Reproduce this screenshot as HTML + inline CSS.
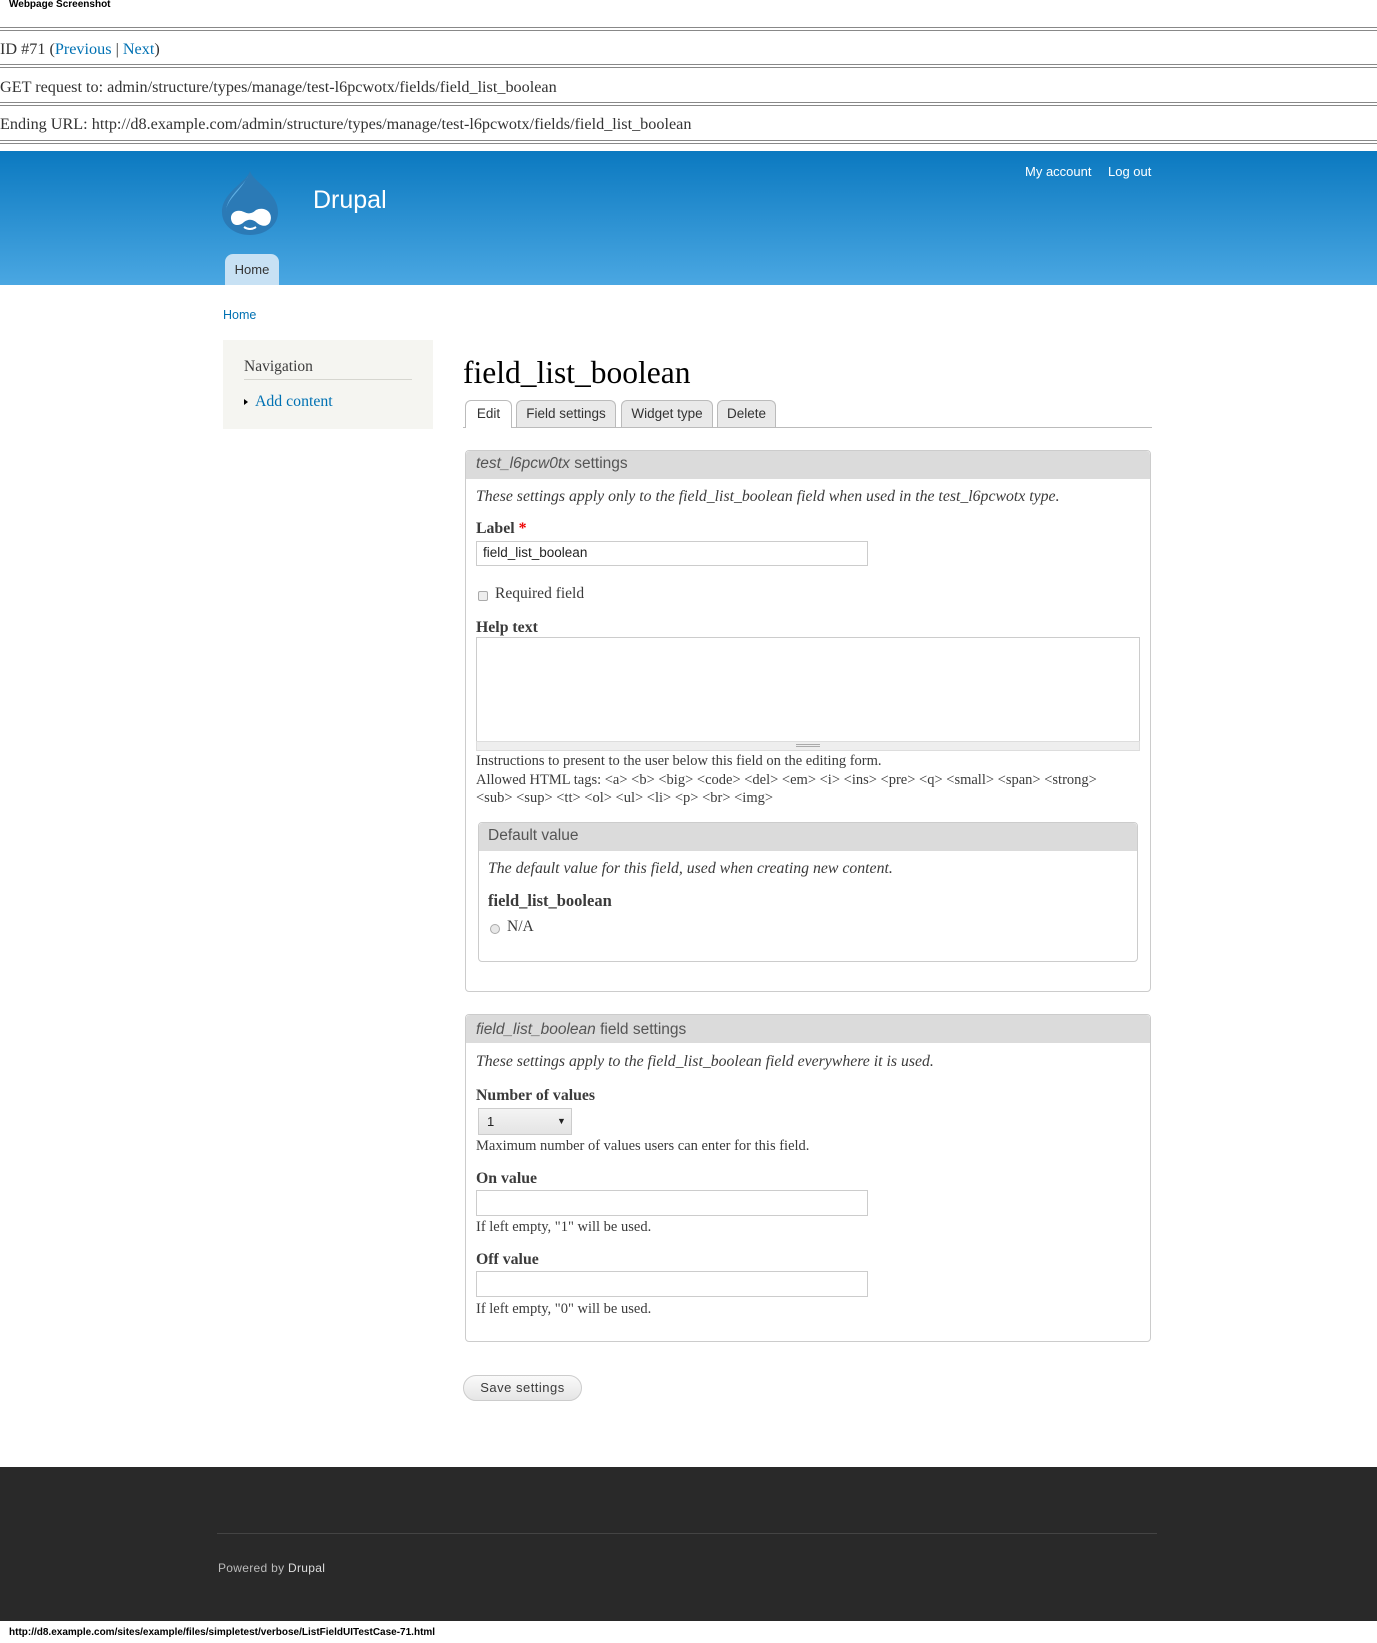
<!DOCTYPE html>
<html><head><meta charset="utf-8"><style>
*{margin:0;padding:0;box-sizing:border-box}
body{width:1377px;height:1639px;position:relative;background:#fff;overflow:hidden;font-family:"Liberation Serif",serif;color:#3b3b3b}
.t{position:absolute;white-space:nowrap;line-height:20px}
.s{font-family:"Liberation Sans",sans-serif}
.hr{position:absolute;left:0;width:1377px;height:4px;border-top:1px solid #888;border-bottom:1px solid #888}
.box{position:absolute;border:1px solid #ccc;border-radius:4px;background:#fff}
.lg{position:absolute;left:0;right:0;top:0;height:28px;background:#dbdbdb;border-radius:4px 4px 0 0}
.in{position:absolute;border:1px solid #ccc;background:#fff}
a{color:#0071b3;text-decoration:none}
.tab{position:absolute;top:400px;height:27px;border:1px solid #bbb;border-bottom:none;border-radius:6px 6px 0 0;background:#e9e9e9;font-family:"Liberation Sans",sans-serif;font-size:13.5px;color:#333;line-height:26px;text-align:center}
.b{font-size:15.8px;font-weight:bold}
</style></head><body>
<div class="t s" style="left:9px;top:-5px;font-size:10px;font-weight:bold;color:#000">Webpage Screenshot</div>
<div class="hr" style="top:27px"></div>
<div class="t" style="left:0;top:39px;font-size:16.2px;color:#333">ID #71 (<a>Previous</a> | <a>Next</a>)</div>
<div class="hr" style="top:64px"></div>
<div class="t" style="left:0;top:77px;font-size:16.2px;color:#333">GET request to: admin/structure/types/manage/test-l6pcwotx/fields/field_list_boolean</div>
<div class="hr" style="top:102px"></div>
<div class="t" style="left:0;top:114px;font-size:16.2px;color:#333">Ending URL: http://d8.example.com/admin/structure/types/manage/test-l6pcwotx/fields/field_list_boolean</div>
<div class="hr" style="top:140px"></div>

<div style="position:absolute;left:0;top:151px;width:1377px;height:134px;background:linear-gradient(#0b79c0,#4aa7e2)"></div>
<svg style="position:absolute;left:220px;top:170px" width="60" height="66" viewBox="0 0 60 66">
<path d="M30 1 C33 12 58 22 58 42 C58 56 45 65 30 65 C15 65 2 56 2 42 C2 22 27 12 30 1Z" fill="#2b7ab6"/>
<path d="M28 6 C24 16 6 26 6 42 C6 30 20 22 28 6Z" fill="#5fb0e4"/>
<path d="M12 52 C8 44 16 38 24 42 C28 44 32 44 36 40 C44 36 54 42 50 52 C47 58 40 56 36 52 C32 49 28 49 24 52 C20 56 14 56 12 52Z" fill="#fff"/>
<path d="M24 57 Q30 61 36 57" stroke="#fff" stroke-width="2" fill="none"/>
</svg>
<div class="t s" style="left:313px;top:184px;font-size:25px;line-height:32px;color:#fff">Drupal</div>
<div class="t s" style="left:1025px;top:162px;font-size:13px;color:#fff">My account</div>
<div class="t s" style="left:1108px;top:162px;font-size:13px;color:#fff">Log out</div>
<div style="position:absolute;left:225px;top:254px;width:54px;height:31px;background:#c7e1f4;border-radius:8px 8px 0 0;font-family:'Liberation Sans',sans-serif;font-size:13px;color:#333;text-align:center;line-height:31px">Home</div>

<div class="t s" style="left:223px;top:305px;font-size:12.5px;color:#0071b3">Home</div>
<div style="position:absolute;left:223px;top:340px;width:210px;height:89px;background:#f5f5f1"></div>
<div class="t" style="left:244px;top:357px;font-size:15.5px;color:#3b3b3b">Navigation</div>
<div style="position:absolute;left:244px;top:379px;width:168px;height:1px;background:#d6d6d0"></div>
<div style="position:absolute;left:244px;top:399px;border-left:4px solid #000;border-top:3px solid transparent;border-bottom:3px solid transparent"></div>
<div class="t" style="left:255px;top:392px;font-size:15.8px;color:#0071b3">Add content</div>

<div class="t" style="left:463px;top:355px;font-size:31.5px;line-height:36px;color:#000">field_list_boolean</div>
<div style="position:absolute;left:463px;top:427px;width:689px;height:1px;background:#bbb"></div>
<div class="tab" style="left:465px;width:47px;background:#fff;height:28px">Edit</div>
<div class="tab" style="left:516px;width:100px">Field settings</div>
<div class="tab" style="left:621px;width:92px">Widget type</div>
<div class="tab" style="left:717px;width:59px">Delete</div>

<div class="box" style="left:465px;top:450px;width:686px;height:542px"><div class="lg"></div></div>
<div class="t s" style="left:476px;top:454px;font-size:15.5px;color:#555"><i>test_l6pcw0tx</i> settings</div>
<div class="t" style="left:476px;top:487px;font-size:15.8px;font-style:italic">These settings apply only to the field_list_boolean field when used in the test_l6pcwotx type.</div>
<div class="t b" style="left:476px;top:519px">Label <span style="color:#e00">*</span></div>
<div class="in" style="left:476px;top:541px;width:392px;height:25px"></div>
<div class="t s" style="left:483px;top:543px;font-size:13.5px;color:#222">field_list_boolean</div>
<div style="position:absolute;left:478px;top:591px;width:10px;height:10px;border:1px solid #aaa;border-radius:2px;background:#eee"></div>
<div class="t" style="left:495px;top:584px;font-size:15.5px">Required field</div>
<div class="t b" style="left:476px;top:618px">Help text</div>
<div class="in" style="left:476px;top:637px;width:664px;height:105px"></div>
<div style="position:absolute;left:476px;top:741px;width:664px;height:10px;background:#eee;border:1px solid #ddd"></div>
<div style="position:absolute;left:796px;top:744px;width:24px;height:3px;border-top:1px solid #aaa;border-bottom:1px solid #aaa"></div>
<div class="t" style="left:476px;top:751px;font-size:14.5px">Instructions to present to the user below this field on the editing form.</div>
<div class="t" style="left:476px;top:770px;font-size:14.5px">Allowed HTML tags: &lt;a&gt; &lt;b&gt; &lt;big&gt; &lt;code&gt; &lt;del&gt; &lt;em&gt; &lt;i&gt; &lt;ins&gt; &lt;pre&gt; &lt;q&gt; &lt;small&gt; &lt;span&gt; &lt;strong&gt;</div>
<div class="t" style="left:476px;top:788px;font-size:14.5px">&lt;sub&gt; &lt;sup&gt; &lt;tt&gt; &lt;ol&gt; &lt;ul&gt; &lt;li&gt; &lt;p&gt; &lt;br&gt; &lt;img&gt;</div>

<div class="box" style="left:478px;top:822px;width:660px;height:140px"><div class="lg"></div></div>
<div class="t s" style="left:488px;top:826px;font-size:15.5px;color:#555">Default value</div>
<div class="t" style="left:488px;top:859px;font-size:15.8px;font-style:italic">The default value for this field, used when creating new content.</div>
<div class="t b" style="left:488px;top:891px;font-size:16.5px">field_list_boolean</div>
<div style="position:absolute;left:490px;top:924px;width:10px;height:10px;border:1px solid #aaa;border-radius:50%;background:#e8e8e8"></div>
<div class="t" style="left:507px;top:917px;font-size:15.5px">N/A</div>

<div class="box" style="left:465px;top:1014px;width:686px;height:328px"><div class="lg"></div></div>
<div class="t s" style="left:476px;top:1020px;font-size:15.5px;color:#555"><i>field_list_boolean</i> field settings</div>
<div class="t" style="left:476px;top:1052px;font-size:15.8px;font-style:italic">These settings apply to the field_list_boolean field everywhere it is used.</div>
<div class="t b" style="left:476px;top:1086px">Number of values</div>
<div style="position:absolute;left:478px;top:1108px;width:94px;height:27px;border:1px solid #ccc;background:linear-gradient(#f4f4f4,#e4e4e4)"></div>
<div class="t s" style="left:487px;top:1112px;font-size:13px;color:#222">1</div>
<div class="t s" style="left:557px;top:1111px;font-size:9px;color:#222">▼</div>
<div class="t" style="left:476px;top:1136px;font-size:14.5px">Maximum number of values users can enter for this field.</div>
<div class="t b" style="left:476px;top:1169px">On value</div>
<div class="in" style="left:476px;top:1190px;width:392px;height:26px"></div>
<div class="t" style="left:476px;top:1217px;font-size:14.5px">If left empty, "1" will be used.</div>
<div class="t b" style="left:476px;top:1250px">Off value</div>
<div class="in" style="left:476px;top:1271px;width:392px;height:26px"></div>
<div class="t" style="left:476px;top:1299px;font-size:14.5px">If left empty, "0" will be used.</div>

<div style="position:absolute;left:463px;top:1375px;width:119px;height:26px;border:1px solid #ccc;border-radius:13px;background:linear-gradient(#fafafa,#e5e5e5);font-family:'Liberation Sans',sans-serif;font-size:13px;color:#3a3a3a;text-align:center;line-height:24px;letter-spacing:.5px">Save settings</div>

<div style="position:absolute;left:0;top:1467px;width:1377px;height:154px;background:#292929"></div>
<div style="position:absolute;left:217px;top:1533px;width:940px;height:1px;background:#444"></div>
<div class="t s" style="left:218px;top:1558px;font-size:12px;color:#bbb;letter-spacing:.3px">Powered by <span style="color:#ddd">Drupal</span></div>
<div class="t s" style="left:9px;top:1623px;font-size:10px;font-weight:bold;color:#000">http://d8.example.com/sites/example/files/simpletest/verbose/ListFieldUITestCase-71.html</div>
</body></html>
